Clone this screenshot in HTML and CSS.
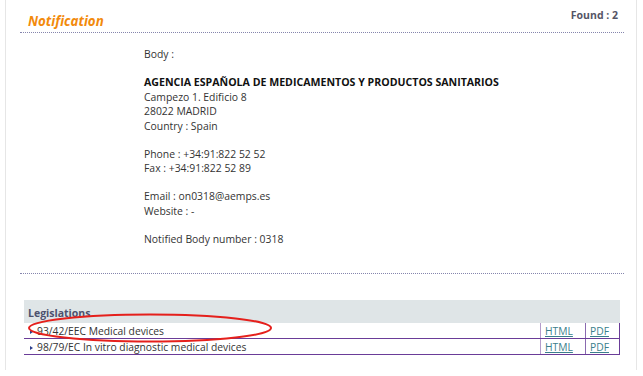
FILE: index.html
```html
<!DOCTYPE html>
<html>
<head>
<meta charset="utf-8">
<link rel="stylesheet" href="styles.css">
</head>
<body>
<div class="page">
  <div class="panel">
    <div class="head">
      <h1 class="title">Notification</h1>
      <div class="found">Found : 2</div>
    </div>
    <div class="details">
      <div class="group">Body :</div>
      <div class="group">
        <div class="org">AGENCIA ESPAÑOLA DE MEDICAMENTOS Y PRODUCTOS SANITARIOS</div>
        <div>Campezo 1. Edificio 8</div>
        <div>28022 MADRID</div>
        <div>Country : Spain</div>
      </div>
      <div class="group">
        <div>Phone : +34:91:822 52 52</div>
        <div>Fax : +34:91:822 52 89</div>
      </div>
      <div class="group">
        <div>Email : on0318@aemps.es</div>
        <div>Website : -</div>
      </div>
      <div class="group">Notified Body number : 0318</div>
    </div>
    <div class="legis">
      <div class="legis-head">Legislations</div>
      <table class="legis-table">
        <tr>
          <td class="name"><span class="bullet"></span>93/42/EEC Medical devices</td>
          <td class="link html"><a href="#">HTML</a></td>
          <td class="link pdf"><a href="#">PDF</a></td>
        </tr>
        <tr>
          <td class="name"><span class="bullet"></span>98/79/EC In vitro diagnostic medical devices</td>
          <td class="link html"><a href="#">HTML</a></td>
          <td class="link pdf"><a href="#">PDF</a></td>
        </tr>
      </table>
    </div>
  </div>
  <svg class="mark" width="260" height="36" viewBox="0 0 260 36">
    <ellipse cx="130" cy="18" rx="121" ry="13.5" fill="none" stroke="#e5201c" stroke-width="2"/>
  </svg>
</div>
</body>
</html>
```
FILE: styles.css
```css
html, body {
  margin: 0;
  padding: 0;
  background: #ffffff;
}
body {
  font-family: "Open Sans", "Noto Sans", sans-serif;
  color: #333333;
}
.page {
  position: relative;
  margin: 0 6px 0 5px;
  height: 370px;
  border-left: 1px solid #e6e6e6;
  border-right: 1px solid #e6e6e6;
  box-sizing: border-box;
}
.panel {
  margin: 0 12px 0 14px;
}
.head {
  display: flex;
  justify-content: space-between;
  align-items: flex-start;
  height: 32px;
  border-bottom: 1px dotted #8585ad;
  padding: 0 6px 0 8px;
}
.title {
  margin: 12px 0 0 0;
  font-size: 13.3px;
  font-weight: bold;
  font-style: italic;
  color: #f28a0c;
  line-height: 18px;
}
.found {
  margin-top: 8px;
  font-size: 10.5px;
  font-weight: bold;
  color: #555566;
  line-height: 14px;
}
.details {
  padding: 14px 0 27px 124px;
  font-size: 10.4px;
  line-height: 14.5px;
  border-bottom: 1px dotted #8585ad;
}
.group {
  margin-bottom: 13.5px;
}
.group:last-child {
  margin-bottom: 0;
}
.org {
  font-weight: bold;
  font-size: 10.6px;
  color: #111111;
}
.legis {
  margin: 26px 4px 0 4px;
}
.legis-head {
  background: #dfe5e7;
  height: 23px;
  box-sizing: border-box;
  padding: 4px 0 0 4px;
  font-size: 10.5px;
  font-weight: bold;
  color: #4d526e;
  line-height: 18px;
}
.legis-table {
  width: 100%;
  border-collapse: collapse;
  font-size: 10.3px;
  line-height: 14px;
}
.legis-table td {
  border-bottom: 1px solid #6a3c98;
  padding: 0;
  height: 15px;
}
.name {
  padding-left: 6px !important;
  color: #333333;
}
.bullet {
  display: inline-block;
  width: 0;
  height: 0;
  border-left: 3px solid #2c3e8c;
  border-top: 2.5px solid transparent;
  border-bottom: 2.5px solid transparent;
  margin-right: 4px;
  vertical-align: 1px;
}
.link {
  padding-left: 4px !important;
}
.html {
  width: 40px;
  border-left: 1px solid #b49ccb;
}
.pdf {
  width: 29px;
  border-left: 1px solid #8a6ab0;
  border-right: 1px solid #6a3c98;
}
.link a {
  color: #3b7f8c;
  text-decoration: underline;
}
.mark {
  position: absolute;
  left: 14px;
  top: 310px;
}
```
